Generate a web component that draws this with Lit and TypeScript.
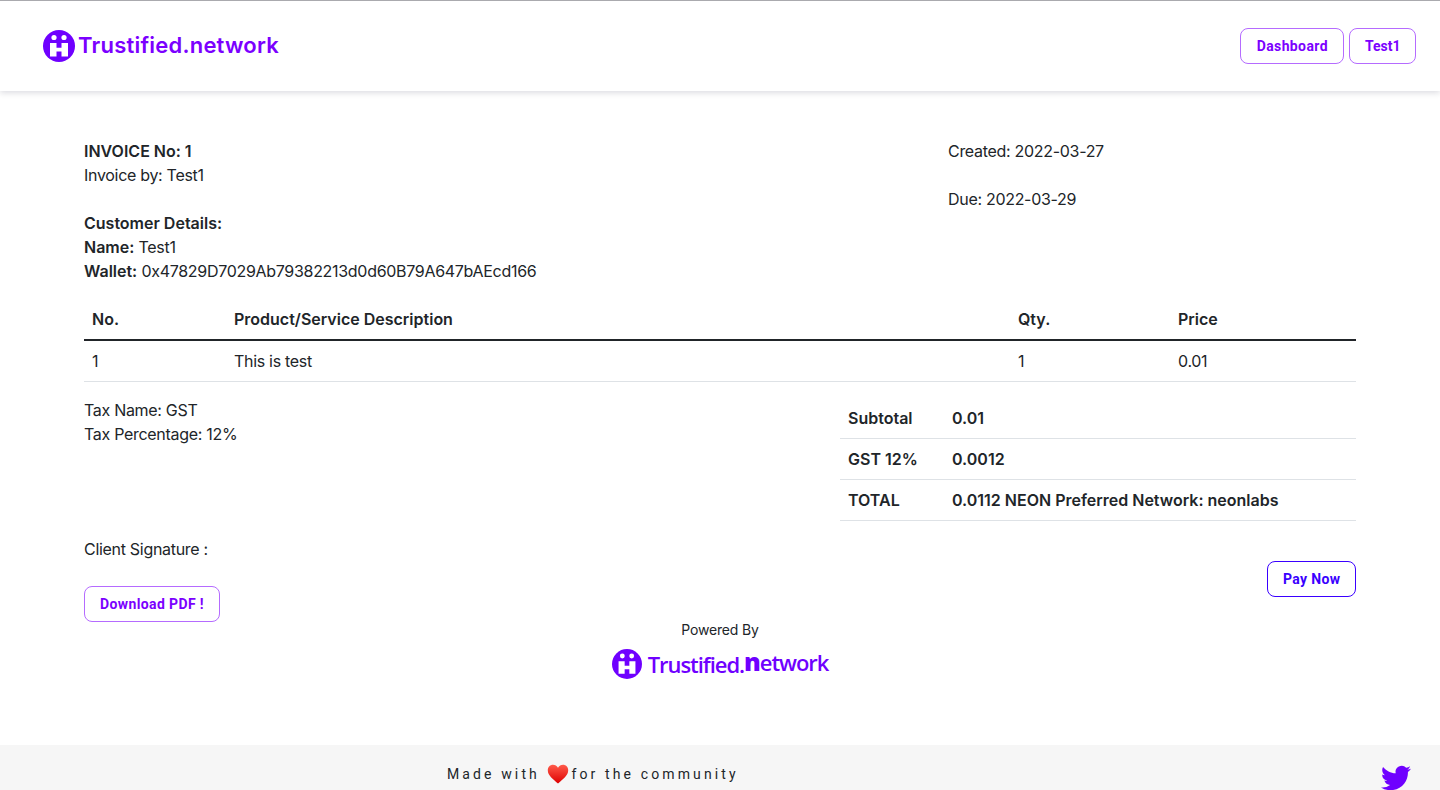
import { LitElement, html, css, svg } from "lit";
import { customElement } from "lit/decorators.js";

const mark = (size: number) => html`<svg class="mark" width=${size} height=${size} viewBox="0 0 32 32">
  <circle cx="16" cy="16" r="16" fill="#6f00ff"></circle>
  <circle cx="11" cy="7.500" r="2.600" fill="#fff"></circle>
  <circle cx="21" cy="7.500" r="2.600" fill="#fff"></circle>
  <path d="M7 13h6.500v4.800h5V13H25v13.500h-6.500v-5h-5v5H7z" fill="#fff"></path>
</svg>`;

const bird = svg`<path d="M23.953 4.57a10 10 0 01-2.825.775 4.958 4.958 0 002.163-2.723c-.951.555-2.005.959-3.127 1.184a4.92 4.92 0 00-8.384 4.482C7.69 8.095 4.067 6.13 1.64 3.162a4.822 4.822 0 00-.666 2.475c0 1.71.87 3.213 2.188 4.096a4.904 4.904 0 01-2.228-.616v.06a4.923 4.923 0 003.946 4.827 4.996 4.996 0 01-2.212.085 4.936 4.936 0 004.604 3.417 9.867 9.867 0 01-6.102 2.105c-.39 0-.779-.023-1.17-.067a13.995 13.995 0 007.557 2.209c9.053 0 13.998-7.496 13.998-13.985 0-.21 0-.42-.015-.63A9.935 9.935 0 0024 4.59z"></path>`;

@customElement("app-root")
export class AppRoot extends LitElement {
  static styles = css`
    :host {
      display: block;
      height: 790px;
      overflow: hidden;
      background: #fff;
      color: #212529;
      font-family: Inter, "Liberation Sans", sans-serif;
      font-size: 16px;
      line-height: 24px;
      letter-spacing: -0.3px;
    }
    * { box-sizing: border-box; }
    b { font-weight: 600; letter-spacing: 0; }
    .nav {
      height: 91px;
      border-top: 1px solid #aaaaae;
      padding: 0 24px 0 43px;
      display: flex;
      align-items: center;
      justify-content: space-between;
      box-shadow: 0 2px 6px rgba(0, 0, 40, 0.14);
      position: relative;
    }
    .brand { display: flex; align-items: center; gap: 3px; }
    .brand-text {
      font-family: Inter, sans-serif;
      font-size: 22px;
      line-height: 30px;
      font-weight: 600;
      color: #7b00ff;
      letter-spacing: 0.22px;
      position: relative;
      top: -1px;
    }
    .mark { display: block; flex: none; }
    .nav-buttons { display: flex; gap: 5px; }
    .btn {
      height: 36px;
      padding: 0 15px;
      border: 1px solid #b56bff;
      border-radius: 8px;
      background: #fff;
      color: #7b00ff;
      font-family: Roboto, sans-serif;
      font-size: 14px;
      font-weight: 700;
      letter-spacing: 0.38px;
      display: inline-flex;
      align-items: center;
    }
    .btn.dash { padding: 0 15.5px; }
    .btn.plain { letter-spacing: 0; padding: 0 14.5px; }
    .btn.pay { border-color: #3a00ff; color: #3a00ff; padding: 0 14.5px; }
    main { padding: 48px 84px 0; }
    .head { display: grid; grid-template-columns: 864px 1fr; }
    .gap { height: 24px; }
    table { border-collapse: collapse; width: 100%; }
    .items { margin-top: 16px; table-layout: fixed; }
    .items th, .items td { padding: 8px; text-align: left; height: 40px; }
    .items th { font-weight: 600; letter-spacing: 0; border-bottom: 2px solid #212529; }
    .items td { border-bottom: 1px solid #dee2e6; height: 41px; }
    .summary { display: grid; grid-template-columns: 756px 1fr; margin-top: 16px; }
    .totals { table-layout: fixed; }
    .totals td {
      padding: 8px;
      height: 41px;
      font-weight: 600;
      letter-spacing: 0;
      border-bottom: 1px solid #dee2e6;
    }
    .totals tr:first-child td { height: 40px; }
    .totals td:first-child { width: 104px; }
    .actions { display: flex; justify-content: space-between; margin-top: 16px; }
    .sign .btn { margin-top: 25px; }
    .pay-wrap { padding-top: 24px; }
    .powered { display: flex; flex-direction: column; align-items: center; }
    .powered-label { font-size: 14px; line-height: 16px; letter-spacing: -0.15px; }
    .powered-logo { display: flex; align-items: center; gap: 6px; margin-top: 10px; }
    .powered-text {
      font-family: "Open Sans", sans-serif;
      font-size: 22px;
      line-height: 30px;
      font-weight: 600;
      letter-spacing: -1.05px;
      color: #6f00ff;
      white-space: nowrap;
    }
    .powered-text .net { position: relative; top: -2px; }
    .powered-text .n { font-weight: 800; font-size: 25px; }
    footer {
      margin-top: 66px;
      height: 80px;
      background: #f6f6f6;
      display: flex;
      position: relative;
    }
    .made {
      align-self: flex-start;
      margin: 17px 0 0 447px;
      font-family: Roboto, sans-serif;
      font-size: 14px;
      line-height: 24px;
      letter-spacing: 3.12px;
      display: flex;
      align-items: center;
      white-space: pre;
      color: #212529;
    }
    .heart { display: block; margin: 0 3px 0 0; }
    .twitter { position: absolute; left: 1381px; top: 18px; fill: #6f00ff; }
  `;

  render() {
    return html`
      <header class="nav">
        <div class="brand">${mark(32)}<span class="brand-text">Trustified.network</span></div>
        <div class="nav-buttons">
          <button class="btn dash">Dashboard</button>
          <button class="btn plain">Test1</button>
        </div>
      </header>
      <main>
        <section class="head">
          <div>
            <div><b>INVOICE No: 1</b></div>
            <div>Invoice by: Test1</div>
            <div class="gap"></div>
            <div><b>Customer Details:</b></div>
            <div><b>Name:</b> Test1</div>
            <div><b>Wallet:</b> 0x47829D7029Ab79382213d0d60B79A647bAEcd166</div>
          </div>
          <div>
            <div>Created: 2022-03-27</div>
            <div class="gap"></div>
            <div>Due: 2022-03-29</div>
          </div>
        </section>
        <table class="items">
          <colgroup>
            <col style="width:142px" /><col style="width:784px" /><col style="width:160px" /><col />
          </colgroup>
          <thead>
            <tr><th>No.</th><th>Product/Service Description</th><th>Qty.</th><th>Price</th></tr>
          </thead>
          <tbody>
            <tr><td>1</td><td>This is test</td><td>1</td><td>0.01</td></tr>
          </tbody>
        </table>
        <section class="summary">
          <div>
            <div>Tax Name: GST</div>
            <div>Tax Percentage: 12%</div>
          </div>
          <table class="totals">
            <tr><td>Subtotal</td><td>0.01</td></tr>
            <tr><td>GST 12%</td><td>0.0012</td></tr>
            <tr><td>TOTAL</td><td>0.0112 NEON Preferred Network: neonlabs</td></tr>
          </table>
        </section>
        <section class="actions">
          <div class="sign">
            <div>Client Signature :</div>
            <button class="btn">Download PDF !</button>
          </div>
          <div class="pay-wrap"><button class="btn pay">Pay Now</button></div>
        </section>
        <section class="powered">
          <div class="powered-label">Powered By</div>
          <div class="powered-logo">
            ${mark(30)}
            <span class="powered-text">Trustified.<span class="net"><span class="n">n</span>etwork</span></span>
          </div>
        </section>
      </main>
      <footer>
        <div class="made">Made with <svg class="heart" width="22" height="20" viewBox="0 0 22 20">
            <defs><linearGradient id="h" x1="0" y1="0" x2="0" y2="1"><stop offset="0" stop-color="#ff5a4a"></stop><stop offset="1" stop-color="#dd0000"></stop></linearGradient></defs>
            <path d="M11 19.5C6 15 .8 11.5.8 6.2.8 3 3.2.8 6 .8c2.100 0 3.900 1.100 5 3 1.100-1.900 2.900-3 5-3 2.800 0 5.200 2.200 5.200 5.400 0 5.300-5.200 8.800-10.200 13.300z" fill="url(#h)"></path>
          </svg>for the community</div>
        <svg class="twitter" width="30" height="30" viewBox="0 0 24 24">${bird}</svg>
      </footer>
    `;
  }
}
